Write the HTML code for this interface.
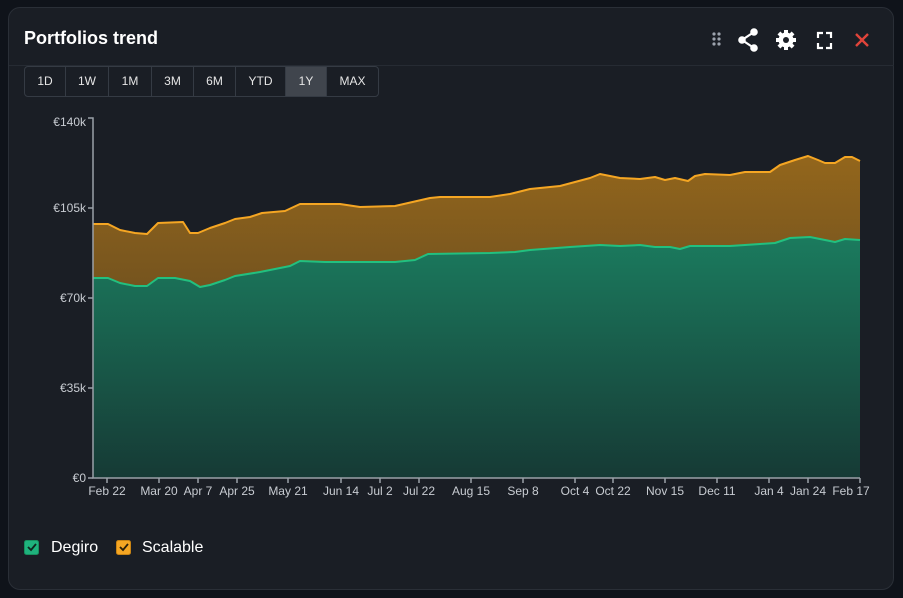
<!DOCTYPE html>
<html><head><meta charset="utf-8"><style>
html,body{margin:0;padding:0;width:903px;height:598px;background:#0f131a;overflow:hidden;font-family:"Liberation Sans",sans-serif;}
.card{position:absolute;left:8px;top:7px;width:886px;height:583px;background:#1a1e25;border:1px solid #2a2f37;border-radius:12px;box-sizing:border-box;}
.title{position:absolute;left:24px;top:28px;color:#fff;font-weight:bold;font-size:18px;}
.hr{position:absolute;left:9px;right:9px;top:65px;height:1px;background:#262b33;}
.btns{position:absolute;left:24px;top:66px;height:31px;display:flex;border:1px solid #353b44;border-radius:4px;overflow:hidden;box-sizing:border-box;width:355px;}
.btns div{color:#e6e6e6;font-size:12px;line-height:29px;text-align:center;border-right:1px solid #353b44;box-sizing:border-box;}
.btns div:last-child{border-right:none}
.btns .a{background:#40454d}
.leg{position:absolute;top:539px;font-size:16px;color:#fff;}
</style></head><body>
<div class="card"></div>
<div class="title">Portfolios trend</div>
<div class="hr"></div>
<div class="btns">
<div style="width:41px">1D</div><div style="width:43px">1W</div><div style="width:43px">1M</div><div style="width:42px">3M</div><div style="width:42px">6M</div><div style="width:50px">YTD</div><div class="a" style="width:41px">1Y</div><div style="width:51px">MAX</div>
</div>
<svg style="position:absolute;left:0;top:0" width="903" height="598">
<g fill="#9ca3ad">
<circle cx="714" cy="34" r="1.6"/><circle cx="719" cy="34" r="1.6"/><circle cx="714" cy="39" r="1.6"/><circle cx="719" cy="39" r="1.6"/><circle cx="714" cy="44" r="1.6"/><circle cx="719" cy="44" r="1.6"/>
</g>
<g fill="#fff" stroke="#fff">
<circle cx="754" cy="32" r="3.3"/><circle cx="742" cy="40" r="3.3"/><circle cx="754" cy="48" r="3.3"/>
<path d="M754 32L742 40L754 48" stroke-width="2.2" fill="none"/>
</g>
<g transform="translate(786,40)">
<circle r="7.5" fill="#fff"/>
<g fill="#fff"><rect x="-2" y="-10" width="4" height="20"/><rect x="-10" y="-2" width="20" height="4"/><rect x="-2" y="-10" width="4" height="20" transform="rotate(45)"/><rect x="-2" y="-10" width="4" height="20" transform="rotate(-45)"/></g>
<circle r="3" fill="#1a1e25"/>
</g>
<path d="M818 38v-5h5M826 33h5v5M831 43v5h-5M823 48h-5v-5" stroke="#fff" stroke-width="2.2" fill="none"/>
<path d="M856 34l12 12M868 34l-12 12" stroke="#e0443a" stroke-width="2.4"/>
<defs>
<linearGradient id="go" x1="0" y1="0" x2="0" y2="1"><stop offset="0" stop-color="#93661c"/><stop offset="1" stop-color="#4a3a22"/></linearGradient>
<linearGradient id="gg" x1="0" y1="0" x2="0" y2="1"><stop offset="0" stop-color="#1b7b5e"/><stop offset="1" stop-color="#163a35"/></linearGradient>
</defs>
<path fill="url(#go)" d="M93 224L108 224L120 230L135 233L147 234L158 223L183 222L190 233L198 233L210 228L225 223L235 219L250 217L262 213L285 211L300 204L340 204L360 207L395 206L430 198L440 197L490 197L510 194L530 189L560 186L575 182L590 178L600 174L620 178L640 179L655 177L665 180L675 178L688 181L695 176L705 174L730 175L745 172L770 172L780 165L795 160L808 156L818 160L825 163L835 163L845 157L852 157L860 161L860 478L93 478Z"/>
<path fill="url(#gg)" d="M93 278L108 278L120 283L135 286L147 286L158 278L175 278L190 281L200 287L210 285L225 280L235 276L260 272L290 266L300 261L325 262L345 262L395 262L415 260L428 254L490 253L515 252L530 250L570 247L600 245L620 246L640 245L655 247L670 247L680 249L690 246L730 246L760 244L775 243L790 238L810 237L825 240L835 242L845 239L860 240L860 478L93 478Z"/>
<path fill="none" stroke="#f5a623" stroke-width="2" stroke-linejoin="round" d="M93 224L108 224L120 230L135 233L147 234L158 223L183 222L190 233L198 233L210 228L225 223L235 219L250 217L262 213L285 211L300 204L340 204L360 207L395 206L430 198L440 197L490 197L510 194L530 189L560 186L575 182L590 178L600 174L620 178L640 179L655 177L665 180L675 178L688 181L695 176L705 174L730 175L745 172L770 172L780 165L795 160L808 156L818 160L825 163L835 163L845 157L852 157L860 161"/>
<path fill="none" stroke="#22c07f" stroke-width="2" stroke-linejoin="round" d="M93 278L108 278L120 283L135 286L147 286L158 278L175 278L190 281L200 287L210 285L225 280L235 276L260 272L290 266L300 261L325 262L345 262L395 262L415 260L428 254L490 253L515 252L530 250L570 247L600 245L620 246L640 245L655 247L670 247L680 249L690 246L730 246L760 244L775 243L790 238L810 237L825 240L835 242L845 239L860 240"/>
<g stroke="#9aa0a8" stroke-width="1.5" fill="none">
<path d="M88 118H93V478H860"/>
<path d="M88 208H93M88 298H93M88 388H93M88 478H93"/>
<path d="M107 478v5M159 478v5M198 478v5M237 478v5M288 478v5M341 478v5M380 478v5M419 478v5M471 478v5M523 478v5M575 478v5M613 478v5M665 478v5M717 478v5M769 478v5M808 478v5M860 478v5"/>
</g>
<g fill="#c8ccd2" font-size="12" font-family="Liberation Sans,sans-serif" text-anchor="end">
<text x="86" y="126">€140k</text><text x="86" y="212">€105k</text><text x="86" y="302">€70k</text><text x="86" y="392">€35k</text><text x="86" y="482">€0</text>
</g>
<g fill="#c8ccd2" font-size="12" font-family="Liberation Sans,sans-serif" text-anchor="middle">
<text x="107" y="495">Feb 22</text><text x="159" y="495">Mar 20</text><text x="198" y="495">Apr 7</text><text x="237" y="495">Apr 25</text><text x="288" y="495">May 21</text><text x="341" y="495">Jun 14</text><text x="380" y="495">Jul 2</text><text x="419" y="495">Jul 22</text><text x="471" y="495">Aug 15</text><text x="523" y="495">Sep 8</text><text x="575" y="495">Oct 4</text><text x="613" y="495">Oct 22</text><text x="665" y="495">Nov 15</text><text x="717" y="495">Dec 11</text><text x="769" y="495">Jan 4</text><text x="808" y="495">Jan 24</text><text x="851" y="495">Feb 17</text>
</g>
<rect x="24.5" y="540.5" width="14" height="14" rx="2" fill="#1fb27d" stroke="#17905f"/>
<path d="M28 547l3 3l5-6" stroke="#10261e" stroke-width="1.8" fill="none"/>
<rect x="116.5" y="540.5" width="14" height="14" rx="2" fill="#f5a623" stroke="#c98414"/>
<path d="M120 547l3 3l5-6" stroke="#2a1f0b" stroke-width="1.8" fill="none"/>
</svg>
<div class="leg" style="left:51px">Degiro</div>
<div class="leg" style="left:142px">Scalable</div>
</body></html>
